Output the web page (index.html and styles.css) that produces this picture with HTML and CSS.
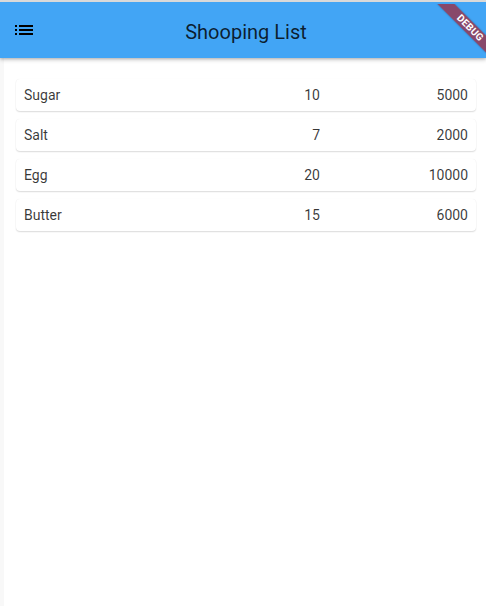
FILE: index.html
```html
<!DOCTYPE html>
<html>
<head>
<meta charset="utf-8">
<link rel="stylesheet" href="styles.css">
</head>
<body>
<div class="screen">
  <header class="appbar">
    <button class="menu" aria-label="menu">
      <svg width="24" height="24" viewBox="0 0 24 24"><path fill="#000" d="M3 13h2v-2H3v2zm0 4h2v-2H3v2zm0-8h2V7H3v2zm4 4h14v-2H7v2zm0 4h14v-2H7v2zM7 7v2h14V7H7z"/></svg>
    </button>
    <h1 class="title">Shooping List</h1>
    <span class="spacer"></span>
  </header>
  <main class="content">
    <ul class="list">
      <li class="card"><span class="name">Sugar</span><span class="qty">10</span><span class="price">5000</span></li>
      <li class="card"><span class="name">Salt</span><span class="qty">7</span><span class="price">2000</span></li>
      <li class="card"><span class="name">Egg</span><span class="qty">20</span><span class="price">10000</span></li>
      <li class="card"><span class="name">Butter</span><span class="qty">15</span><span class="price">6000</span></li>
    </ul>
  </main>
  <div class="debug"><span>DEBUG</span></div>
</div>
</body>
</html>
```
FILE: styles.css
```css
html, body {
  margin: 0;
  padding: 0;
  height: 100%;
  background: #ffffff;
}
.screen {
  position: relative;
  height: 606px;
  overflow: hidden;
  display: flex;
  flex-direction: column;
  border-top: 2px solid #d9d9d9;
  box-sizing: border-box;
  font-family: Roboto, "Noto Sans", sans-serif;
}
.appbar {
  height: 56px;
  flex: none;
  background: #42a5f5;
  display: flex;
  align-items: center;
  box-shadow: 0 2px 4px rgba(0,0,0,0.2), 0 1px 2px rgba(0,0,0,0.12);
  position: relative;
  z-index: 1;
}
.menu {
  width: 48px;
  height: 48px;
  border: 0;
  padding: 0;
  background: transparent;
  display: flex;
  align-items: center;
  justify-content: center;
  flex: none;
}
.menu svg { display: block; }
.title {
  flex: 1;
  margin: 0;
  text-align: center;
  font-size: 20px;
  font-weight: 400;
  color: rgba(0,0,0,0.82);
  padding: 4px 0 0 6px;
}
.spacer { width: 48px; flex: none; }
.content {
  flex: 1;
  border-left: 4px solid #f8f8f8;
  padding: 21px 10px 0 12px;
}
.list {
  list-style: none;
  margin: 0;
  padding: 0;
  display: flex;
  flex-direction: column;
  gap: 8px;
}
.card {
  height: 32px;
  border-radius: 4px;
  background: #fff;
  box-shadow: 0 1px 1.5px rgba(0,0,0,0.14), 0 0 1px rgba(0,0,0,0.07);
  display: flex;
  align-items: center;
  padding: 0 8px;
  font-size: 14px;
  color: rgba(0,0,0,0.78);
}
.name { flex: 1; }
.qty { width: 60px; text-align: right; margin-right: 68px; }
.price { width: 80px; text-align: right; }
.debug {
  position: absolute;
  top: 2px;
  right: 0;
  width: 60px;
  height: 60px;
  overflow: hidden;
  z-index: 2;
  pointer-events: none;
}
.debug span {
  position: absolute;
  top: 18px;
  right: -24px;
  width: 80px;
  height: 12px;
  line-height: 12px;
  background: rgba(170,28,40,0.68);
  color: #fff;
  font-family: Roboto, sans-serif;
  font-weight: 700;
  font-size: 10px;
  letter-spacing: 0.2px;
  text-align: center;
  transform: rotate(45deg);
  box-shadow: 0 0 2px rgba(0,0,0,0.3);
}
```
